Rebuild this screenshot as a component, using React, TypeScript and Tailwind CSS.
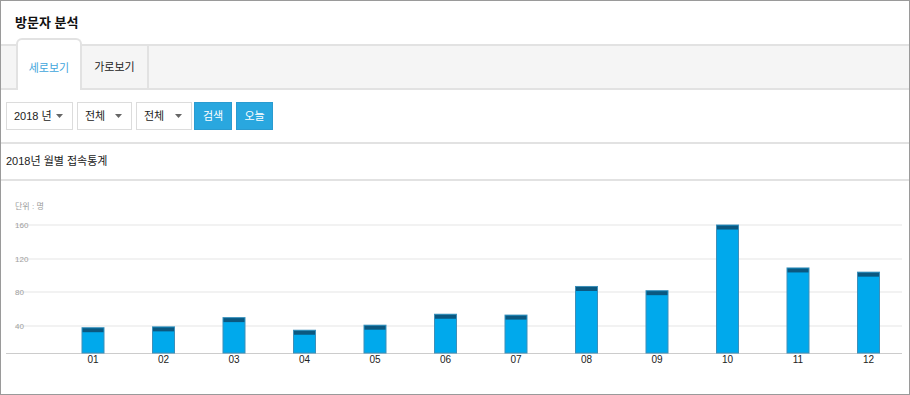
import React from 'react';

const FONT = { fontFamily: '"Liberation Sans", "Noto Sans CJK KR", sans-serif' };

const months = ['01', '02', '03', '04', '05', '06', '07', '08', '09', '10', '11', '12'];
const visits = [38, 39, 50, 35, 41, 54, 53, 87, 82, 160, 109, 104];

function Select({ label, w }: { label: string; w: string }) {
  return (
    <div className={`${w} h-[28px] border border-[#dcdcdc] bg-white flex items-center justify-between pl-[7px] pr-[9px] text-[11px] text-[#222]`}>
      <span>{label}</span>
      <svg width="7" height="4" viewBox="0 0 7 4">
        <path d="M0 0 L7 0 L3.5 4 Z" fill="#666" />
      </svg>
    </div>
  );
}

function Chart() {
  const base = 172;
  const zero = 178.7;
  const unit = 0.8417;
  const grid = [
    { v: 160, y: 44 },
    { v: 120, y: 78 },
    { v: 80, y: 111 },
    { v: 40, y: 145 },
  ];
  return (
    <svg width="908" height="212" viewBox="0 0 908 212" style={FONT}>
      <text x="14" y="28" fontSize="8" fill="#9a9a9a">단위 : 명</text>
      {grid.map((g) => (
        <g key={g.v}>
          <line x1="14" x2="901" y1={g.y} y2={g.y} stroke="#eeeeee" strokeWidth="1.5" />
          <text x="14" y={g.y + 3} fontSize="8" fill="#a0a0a0">{g.v}</text>
        </g>
      ))}
      <line x1="5" x2="901" y1={base + 0.5} y2={base + 0.5} stroke="#cccccc" strokeWidth="1" />
      {visits.map((v, i) => {
        const cx = 92 + i * 70.5;
        const top = zero - v * unit;
        return (
          <g key={i}>
            <rect x={cx - 11} y={top} width="22" height={base - top} fill="#00a9ec" stroke="#3d8fb9" strokeWidth="1" />
            <rect x={cx - 10.5} y={top + 0.5} width="21" height="4" fill="#0b5880" />
            <text x={cx} y="182" fontSize="10" fill="#222" textAnchor="middle">{months[i]}</text>
          </g>
        );
      })}
    </svg>
  );
}

export default function App() {
  return (
    <div className="w-[910px] h-[395px] bg-white border border-[#9a9a9a] overflow-hidden" style={FONT}>
      {/* title */}
      <div className="h-[43px] flex items-center pl-[14px]">
        <h1 className="text-[13px] font-bold text-[#111]">방문자 분석</h1>
      </div>

      {/* tabs */}
      <div className="flex h-[46px] bg-[#f5f5f5] border-t-2 border-b-2 border-[#e2e2e2] pl-[15px]">
        <div className="relative -mt-[8px] h-[52px] w-[66px] bg-white border-2 border-b-0 border-[#e2e2e2] rounded-t-[6px] flex items-center justify-center pt-[6px] text-[11px] text-[#3fa6dc]">
          세로보기
        </div>
        <div className="h-full w-[67px] border-r-2 border-[#e2e2e2] flex items-center justify-center text-[11px] text-[#222]">
          가로보기
        </div>
      </div>

      {/* filters */}
      <div className="flex gap-[4px] pl-[5px] pt-[12px] pb-[12px] border-b-2 border-[#e2e2e2]">
        <Select label="2018 년" w="w-[67px]" />
        <Select label="전체" w="w-[55px]" />
        <Select label="전체" w="w-[56px]" />
        <button className="-ml-[2px] w-[38px] h-[28px] bg-[#29a7df] text-white text-[11px] border border-[#2a9bd0]">검색</button>
        <button className="w-[37px] h-[28px] bg-[#29a7df] text-white text-[11px] border border-[#2a9bd0]">오늘</button>
      </div>

      {/* subtitle */}
      <div className="h-[37px] flex items-center pl-[5px] border-b-2 border-[#e2e2e2] text-[11px] text-[#222]">
        2018년 월별 접속통계
      </div>

      <Chart />
    </div>
  );
}
